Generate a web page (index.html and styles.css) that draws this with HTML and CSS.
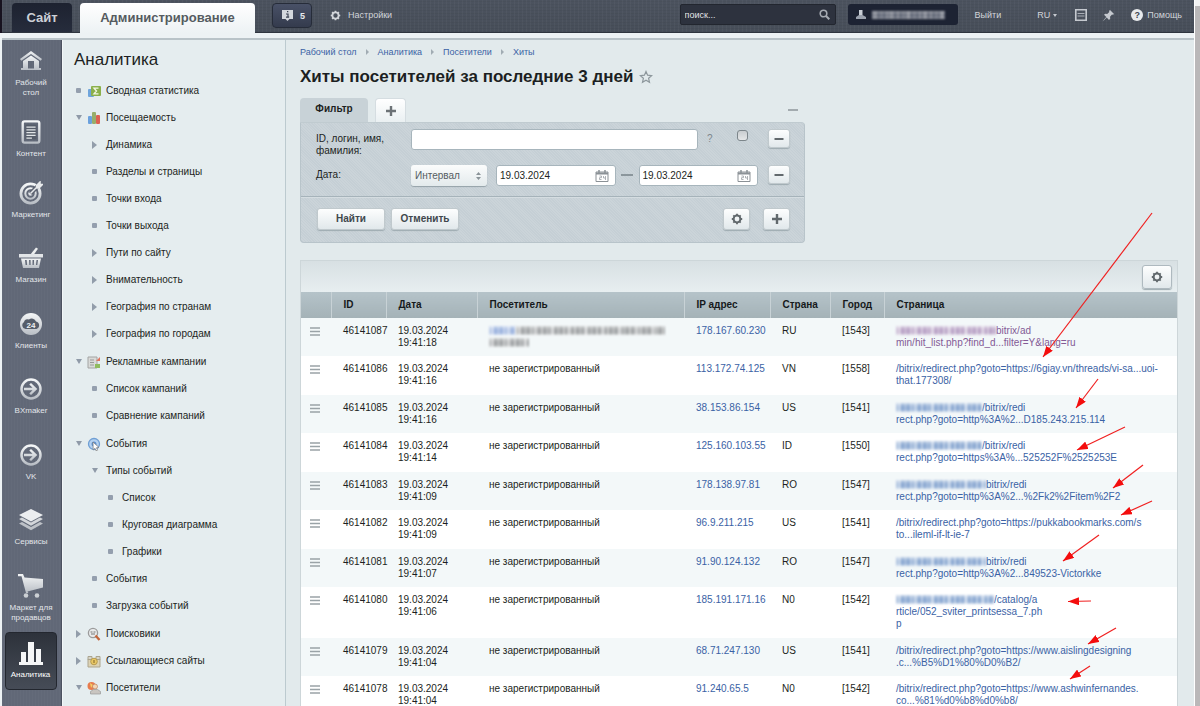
FILE: index.html
```html
<!DOCTYPE html>
<html lang="ru">
<head>
<meta charset="utf-8">
<title>Хиты посетителей</title>
<link rel="stylesheet" href="styles.css">
</head>
<body>
<svg class="defs" aria-hidden="true">
  <defs>
    <linearGradient id="metal" x1="0" y1="0" x2="0" y2="1"><stop offset="0" stop-color="#f4f6f7"/><stop offset="1" stop-color="#b9bec5"/></linearGradient>
    <symbol id="gear" viewBox="0 0 12 12"><circle cx="6" cy="6" r="3.4" fill="none" stroke="currentColor" stroke-width="2"/><path d="M6 .8v2M6 9.200v2M.8 6h2M9.200 6h2M2.300 2.300l1.400 1.400M8.300 8.300l1.400 1.400M2.300 9.700l1.400-1.400M8.300 3.700l1.400-1.400" stroke="currentColor" stroke-width="1.800"/></symbol>
    <symbol id="plus" viewBox="0 0 12 12"><path d="M6 1v10M1 6h10" stroke="currentColor" stroke-width="2.400"/></symbol>
    <symbol id="minus" viewBox="0 0 12 12"><path d="M1.500 6h9" stroke="currentColor" stroke-width="2"/></symbol>
    <symbol id="cal" viewBox="0 0 14 12"><path d="M1 2h12v9.500H1z" fill="#fff" stroke="#8b9196"/><path d="M1 3.500h12" stroke="#8b9196" stroke-width="2"/><path d="M4 0v3M10 0v3" stroke="#8b9196" stroke-width="1.500"/><path d="M4.500 6h2v1.700h-2v1.800h2M8.500 6v2h2M10.500 6v4" fill="none" stroke="#9aa0a4" stroke-width=".8"/></symbol>
    <symbol id="rows" viewBox="0 0 10 9"><path d="M0 1h10M0 4.500h10M0 8h10" stroke="#9aa3a7" stroke-width="1.300"/></symbol>
    <symbol id="go" viewBox="0 0 24 24"><circle cx="12" cy="12" r="9.500" fill="none" stroke="url(#metal)" stroke-width="2.500"/><path d="M5 10.800h8.500l-3.200-3.200 1.700-1.700 6.300 6.100-6.300 6.100-1.700-1.700 3.200-3.200H5z" fill="url(#metal)"/></symbol>
  </defs>
</svg>
<div class="window">
<div class="app">
  <header class="topbar">
    <nav class="tabs">
      <a class="tab tab-site" href="#">Сайт</a>
      <a class="tab tab-admin" href="#">Администрирование</a>
    </nav>
    <button class="notify" type="button"><svg width="11" height="11" viewBox="0 0 11 11"><path d="M0 0h11v9H7.500L5.500 11 3.500 9H0z" fill="#d3d7dd"/><path d="M4 4h2v3h1.200M4 7.200h3M5 1.600h1.300" fill="none" stroke="#3a4152" stroke-width="1.200"/></svg>5</button>
    <a class="top-link settings" href="#"><svg width="11" height="11"><use href="#gear"/></svg>Настройки</a>
    <div class="top-right">
      <label class="search"><input type="text" placeholder="поиск..." aria-label="поиск"><svg width="11" height="11" viewBox="0 0 11 11"><circle cx="4.500" cy="4.500" r="3.300" fill="none" stroke="#a5aab2" stroke-width="1.600"/><path d="M7 7l3.300 3.300" stroke="#a5aab2" stroke-width="2"/></svg></label>
      <a class="user" href="#" aria-label="Профиль"><svg width="10" height="10" viewBox="0 0 10 10"><path d="M3 0h3.500v5H3z" fill="#c9ced6"/><path d="M0 9V7l3-2h3.500L10 7v2z" fill="#9ba2ae"/></svg><span class="mosaic mosaic-user"></span></a>
      <a class="top-link exit" href="#">Выйти</a>
      <a class="top-link lang" href="#">RU<i class="caret"></i></a>
      <a class="top-link" href="#" aria-label="Панель"><svg width="12" height="12" viewBox="0 0 12 12"><path d="M.8.8h10.400v10.400H.8z" fill="none" stroke="#c5c9cf" stroke-width="1.600"/><path d="M2.500 4.500h7M2.500 7h7" stroke="#a9aeb6" stroke-width="1"/></svg></a>
      <a class="top-link pin" href="#" aria-label="Закрепить"><svg width="11" height="11" viewBox="0 0 11 11"><path d="M7 0l4 4-1 .8-1-.2-2 2.200.2 2L6 10 3.700 7.500.5 10.700l-.3-.3L3.300 7 1 4.800l1.200-1 2 .1L6.300 2 6 1z" fill="#c5c9cf"/></svg></a>
      <a class="top-link help" href="#"><i class="help-mark">?</i>Помощь</a>
    </div>
  </header>

  <div class="body">
    <nav class="rail">
      <a href="#" class="rail-item"><svg width="24" height="24" viewBox="0 0 24 24"><path d="M12 2l11 8-1.300 1.800L12 5 2.300 11.800 1 10z" fill="url(#metal)"/><path fill-rule="evenodd" d="M4 12l8-5.500 8 5.500v7h2v2H2v-2h2zm5 0v7.500h6V12z" fill="url(#metal)"/></svg><span>Рабочий<br>стол</span></a>
      <a href="#" class="rail-item"><svg width="24" height="26" viewBox="0 0 24 26"><rect x="3" y="1.500" width="18" height="23" rx="2" fill="none" stroke="url(#metal)" stroke-width="2.600"/><path d="M6 5h12v16H6z" fill="#555c69"/><path d="M7 7h10v1.400H7zM7 10h10v1.400H7zM7 13h10v1.400H7zM7 16h10v1.400H7zM7 19h6v1.400H7z" fill="#e2e5e8"/></svg><span>Контент</span></a>
      <a href="#" class="rail-item"><svg width="24" height="24" viewBox="0 0 24 24"><circle cx="11.500" cy="12.500" r="9.600" fill="none" stroke="url(#metal)" stroke-width="2.800"/><circle cx="11.500" cy="12.500" r="5.200" fill="none" stroke="url(#metal)" stroke-width="2"/><circle cx="11.500" cy="12.500" r="2.200" fill="#dfe2e6"/><path d="M11.500 12.500L20 4" stroke="#5d6371" stroke-width="4.500"/><path d="M11.500 12.500l8-8M17.500 4.500L21 1v2.500h2.500L20 7h-2.500z" stroke="#e8eaec" stroke-width="1.500" fill="#e8eaec"/></svg><span>Маркетинг</span></a>
      <a href="#" class="rail-item"><svg width="24" height="24" viewBox="0 0 24 24"><path d="M11 9l6-7.500 2 1.300L14.500 9z" fill="#eceeef"/><path d="M0 8h24v3.500H0z" fill="#e2e5e8"/><path fill-rule="evenodd" d="M2 12.500h20L20 22H4zM6 14l.6 5h1.500l-.4-5zm4 0l.3 5h1.300v-5zm3.500 0v5h1.300l.3-5zm4 0l-.5 5h1.300l.7-5z" fill="url(#metal)"/></svg><span>Магазин</span></a>
      <a href="#" class="rail-item"><svg width="24" height="24" viewBox="0 0 24 24"><circle cx="12" cy="12" r="11" fill="url(#metal)"/><path d="M6.500 17a3.800 3.800 0 0 1-1.500-7 3.600 3.600 0 0 1 5-2.500 4.600 4.600 0 0 1 7 2 3.900 3.900 0 0 1 .5 7.500z" fill="#565d6a"/><text x="12" y="15.500" text-anchor="middle" class="badge24">24</text></svg><span>Клиенты</span></a>
      <a href="#" class="rail-item"><svg width="24" height="24"><use href="#go"/></svg><span>BXmaker</span></a>
      <a href="#" class="rail-item"><svg width="24" height="24"><use href="#go"/></svg><span>VK</span></a>
      <a href="#" class="rail-item"><svg width="26" height="24" viewBox="0 0 26 24"><path d="M13 1l12 6-12 6.500L1 7z" fill="#eceef0"/><path d="M1 11l3-1.500 9 5 9-5 3 1.500-12 6.800z" fill="#d3d6da"/><path d="M1 15.500L4 14l9 5 9-5 3 1.500-12 6.800z" fill="#bdc1c7"/></svg><span>Сервисы</span></a>
      <a href="#" class="rail-item"><svg width="26" height="24" viewBox="0 0 26 24"><path d="M0 0h5l1.500 3.500L25 5v8.500L9.500 17.500l1 1.500H8L3.500 2.200H0z" fill="url(#metal)"/><circle cx="8" cy="21.500" r="2.300" fill="#ccd0d4"/><circle cx="19" cy="21.500" r="2.300" fill="#ccd0d4"/></svg><span>Маркет для<br>продавцов</span></a>
      <a href="#" class="rail-item rail-active"><svg width="26" height="24" viewBox="0 0 26 24"><path d="M1 21h2v-10h5v10h2V1h6v20h2V8h5v13h2v3H1z" fill="#f5f6f7"/></svg><span>Аналитика</span></a>
    </nav>

    <aside class="menu">
      <h2>Аналитика</h2>
      <ul>
        <li><a href="#"><i class="dot"></i><svg width="14" height="14" viewBox="0 0 14 14"><rect x="1" y="5" width="6" height="8" rx="1" fill="#6fa5dc"/><rect x="4" y="2" width="10" height="10" rx="1" fill="#8bb04b"/><path d="M11.500 4.200H7L9.500 7 7 9.800h4.500" fill="none" stroke="#f3f8e6" stroke-width="1.300"/></svg>Сводная статистика</a></li>
        <li><a href="#"><i class="open"></i><svg width="14" height="14" viewBox="0 0 14 14"><rect x="1" y="5" width="4" height="8" rx="1" fill="#6ba1dd"/><rect x="5" y="1" width="4" height="12" rx="1" fill="#98ae6a"/><rect x="9" y="4" width="4" height="9" rx="1" fill="#dc6152"/></svg>Посещаемость</a>
          <ul>
            <li><a href="#"><i class="closed"></i>Динамика</a></li>
            <li><a href="#"><i class="dot"></i>Разделы и страницы</a></li>
            <li><a href="#"><i class="dot"></i>Точки входа</a></li>
            <li><a href="#"><i class="dot"></i>Точки выхода</a></li>
            <li><a href="#"><i class="closed"></i>Пути по сайту</a></li>
            <li><a href="#"><i class="closed"></i>Внимательность</a></li>
            <li><a href="#"><i class="closed"></i>География по странам</a></li>
            <li><a href="#"><i class="closed"></i>География по городам</a></li>
          </ul></li>
        <li><a href="#"><i class="open"></i><svg width="14" height="14" viewBox="0 0 14 14"><path d="M1 2h9v11H1z" fill="#d9dad8" stroke="#a3a4a3"/><path d="M3 5h4M3 7.500h4M3 10h4" stroke="#999"/><path d="M9 6l4-4v4z" fill="#e07560"/><path d="M8 9h5v4H8z" fill="#8fbb5e"/></svg>Рекламные кампании</a>
          <ul>
            <li><a href="#"><i class="dot"></i>Список кампаний</a></li>
            <li><a href="#"><i class="dot"></i>Сравнение кампаний</a></li>
          </ul></li>
        <li><a href="#"><i class="open"></i><svg width="14" height="14" viewBox="0 0 14 14"><circle cx="7" cy="7" r="5.500" fill="#b5d2f0" stroke="#6f9fd4" stroke-width="1.300"/><circle cx="7" cy="7" r="2.500" fill="#5e92d0"/><path d="M6 5l6 5.500-2.500.2 1 2.500-1.500.6-1-2.500L6.200 13z" fill="#fff" stroke="#777" stroke-width=".7"/></svg>События</a>
          <ul>
            <li><a href="#"><i class="open"></i>Типы событий</a>
              <ul>
                <li><a href="#"><i class="dot"></i>Список</a></li>
                <li><a href="#"><i class="dot"></i>Круговая диаграмма</a></li>
                <li><a href="#"><i class="dot"></i>Графики</a></li>
              </ul></li>
            <li><a href="#"><i class="dot"></i>События</a></li>
            <li><a href="#"><i class="dot"></i>Загрузка событий</a></li>
          </ul></li>
        <li><a href="#"><i class="closed"></i><svg width="14" height="14" viewBox="0 0 14 14"><circle cx="6" cy="6" r="4.600" fill="#e9ebec" stroke="#9b9b9b" stroke-width="1.300"/><path d="M3.500 5h2M6.500 5h2M4 7h4" stroke="#777"/><path d="M8.500 8.500L12.500 13" stroke="#c4663c" stroke-width="2.400"/></svg>Поисковики</a></li>
        <li><a href="#"><i class="closed"></i><svg width="14" height="14" viewBox="0 0 14 14"><path d="M1 5h12v8H1z" fill="#ddd3b4" stroke="#ada58d"/><path d="M1 2.500h4v3H1zM9 2.500h4v3H9z" fill="#d7d5c9" stroke="#aaa48f"/><circle cx="7" cy="7.500" r="3.300" fill="#e9c865" stroke="#b79b50"/><path d="M7 6v3" stroke="#80652a"/></svg>Ссылающиеся сайты</a></li>
        <li><a href="#"><i class="open"></i><svg width="14" height="14" viewBox="0 0 14 14"><circle cx="4.500" cy="5" r="4" fill="#e77b4d"/><path d="M3 2l3 2-2 3z" fill="#f7cf63"/><circle cx="8" cy="5.500" r="2.500" fill="#f3d6b4" stroke="#bb7d5a" stroke-width=".7"/><path d="M3.500 13V10.500l3-2h4l3 2V13z" fill="#c9c5c0" stroke="#999" stroke-width=".7"/></svg>Посетители</a></li>
      </ul>
    </aside>

    <main class="content">
      <nav class="crumbs"><a href="#">Рабочий стол</a><i class="closed"></i><a href="#">Аналитика</a><i class="closed"></i><a href="#">Посетители</a><i class="closed"></i><a href="#">Хиты</a></nav>
      <h1>Хиты посетителей за последние 3 дней <svg width="14" height="14" viewBox="0 0 14 14"><path d="M7 1.500l1.600 3.700 4 .4-3 2.700.9 4L7 10.200l-3.500 2.100.9-4-3-2.700 4-.4z" fill="none" stroke="#8d979c" stroke-width="1.200"/></svg></h1>

      <form class="filter">
        <div class="filter-tabs">
          <button type="button" class="ftab ftab-on">Фильтр</button>
          <button type="button" class="ftab ftab-add" aria-label="Добавить"><svg width="12" height="12"><use href="#plus"/></svg></button>
          <button type="button" class="fold" aria-label="Свернуть"></button>
        </div>
        <div class="filter-body">
          <div class="frow">
            <label for="who">ID, логин, имя, фамилия:</label>
            <div class="field"><input id="who" class="text" type="text"><span class="hint">?</span><input class="tick" type="checkbox" aria-label="Точное совпадение"></div>
            <button type="button" class="btn sq" aria-label="Убрать"><svg width="12" height="12"><use href="#minus"/></svg></button>
          </div>
          <div class="frow">
            <label for="range">Дата:</label>
            <div class="field">
              <span class="select"><select id="range"><option>Интервал</option></select><svg width="5" height="8" viewBox="0 0 5 8"><path d="M0 3l2.500-3L5 3zM0 5l2.500 3L5 5z" fill="#8a9398"/></svg></span>
              <span class="date"><input type="text" value="19.03.2024" aria-label="Дата с"><svg width="14" height="12"><use href="#cal"/></svg></span>
              <i class="dash"></i>
              <span class="date"><input type="text" value="19.03.2024" aria-label="Дата по"><svg width="14" height="12"><use href="#cal"/></svg></span>
            </div>
            <button type="button" class="btn sq" aria-label="Убрать"><svg width="12" height="12"><use href="#minus"/></svg></button>
          </div>
          <div class="factions">
            <button type="button" class="btn wide">Найти</button>
            <button type="button" class="btn wide">Отменить</button>
            <button type="button" class="btn tool push" aria-label="Настроить"><svg width="12" height="12"><use href="#gear"/></svg></button>
            <button type="button" class="btn tool" aria-label="Добавить условие"><svg width="12" height="12"><use href="#plus"/></svg></button>
          </div>
        </div>
      </form>

      <section class="list">
        <div class="list-top"><button type="button" class="btn list-gear" aria-label="Настроить"><svg width="12" height="12"><use href="#gear"/></svg></button></div>
        <table>
          <colgroup><col class="c-menu"><col class="c-id"><col class="c-date"><col class="c-who"><col class="c-ip"><col class="c-land"><col class="c-city"><col></colgroup>
          <thead><tr><th></th><th>ID</th><th>Дата</th><th>Посетитель</th><th>IP адрес</th><th>Страна</th><th>Город</th><th>Страница</th></tr></thead>
          <tbody>
            <tr><td><svg width="10" height="9"><use href="#rows"/></svg></td><td>46141087</td><td>19.03.2024<br>19:41:18</td><td><span class="mosaic m-link"></span><span class="mosaic m-long"></span><br><span class="mosaic m-short"></span></td><td><a href="#">178.167.60.230</a></td><td>RU</td><td>[1543]</td><td><a class="seen" href="#"><span class="mosaic m-seen"></span>bitrix/ad<br>min/hit_list.php?find_d...filter=Y&amp;lang=ru</a></td></tr>
            <tr><td><svg width="10" height="9"><use href="#rows"/></svg></td><td>46141086</td><td>19.03.2024<br>19:41:16</td><td>не зарегистрированный</td><td><a href="#">113.172.74.125</a></td><td>VN</td><td>[1558]</td><td><a href="#">/bitrix/redirect.php?goto=https://6giay.vn/threads/vi-sa...uoi-<br>that.177308/</a></td></tr>
            <tr><td><svg width="10" height="9"><use href="#rows"/></svg></td><td>46141085</td><td>19.03.2024<br>19:41:16</td><td>не зарегистрированный</td><td><a href="#">38.153.86.154</a></td><td>US</td><td>[1541]</td><td><a href="#"><span class="mosaic m-url"></span>/bitrix/redi<br>rect.php?goto=http%3A%2...D185.243.215.114</a></td></tr>
            <tr><td><svg width="10" height="9"><use href="#rows"/></svg></td><td>46141084</td><td>19.03.2024<br>19:41:14</td><td>не зарегистрированный</td><td><a href="#">125.160.103.55</a></td><td>ID</td><td>[1550]</td><td><a href="#"><span class="mosaic m-url"></span>/bitrix/redi<br>rect.php?goto=https%3A%...525252F%2525253E</a></td></tr>
            <tr><td><svg width="10" height="9"><use href="#rows"/></svg></td><td>46141083</td><td>19.03.2024<br>19:41:09</td><td>не зарегистрированный</td><td><a href="#">178.138.97.81</a></td><td>RO</td><td>[1547]</td><td><a href="#"><span class="mosaic m-url m-wide"></span>bitrix/redi<br>rect.php?goto=http%3A%2...%2Fk2%2Fitem%2F2</a></td></tr>
            <tr><td><svg width="10" height="9"><use href="#rows"/></svg></td><td>46141082</td><td>19.03.2024<br>19:41:09</td><td>не зарегистрированный</td><td><a href="#">96.9.211.215</a></td><td>US</td><td>[1541]</td><td><a href="#">/bitrix/redirect.php?goto=https://pukkabookmarks.com/s<br>to...ileml-if-lt-ie-7</a></td></tr>
            <tr><td><svg width="10" height="9"><use href="#rows"/></svg></td><td>46141081</td><td>19.03.2024<br>19:41:07</td><td>не зарегистрированный</td><td><a href="#">91.90.124.132</a></td><td>RO</td><td>[1547]</td><td><a href="#"><span class="mosaic m-url m-wide"></span>bitrix/redi<br>rect.php?goto=http%3A%2...849523-Victorkke</a></td></tr>
            <tr><td><svg width="10" height="9"><use href="#rows"/></svg></td><td>46141080</td><td>19.03.2024<br>19:41:06</td><td>не зарегистрированный</td><td><a href="#">185.191.171.16</a></td><td>N0</td><td>[1542]</td><td><a href="#"><span class="mosaic m-url m-widest"></span>/catalog/a<br>rticle/052_sviter_printsessa_7.ph<br>p</a></td></tr>
            <tr><td><svg width="10" height="9"><use href="#rows"/></svg></td><td>46141079</td><td>19.03.2024<br>19:41:04</td><td>не зарегистрированный</td><td><a href="#">68.71.247.130</a></td><td>US</td><td>[1541]</td><td><a href="#">/bitrix/redirect.php?goto=https://www.aislingdesigning<br>.c...%B5%D1%80%D0%B2/</a></td></tr>
            <tr><td><svg width="10" height="9"><use href="#rows"/></svg></td><td>46141078</td><td>19.03.2024<br>19:41:04</td><td>не зарегистрированный</td><td><a href="#">91.240.65.5</a></td><td>N0</td><td>[1542]</td><td><a href="#">/bitrix/redirect.php?goto=https://www.ashwinfernandes.<br>co...%81%d0%b8%d0%b8/</a></td></tr>
          </tbody>
        </table>
      </section>
    </main>
  </div>
</div>
<div class="scroll"><i></i></div>
</div>
<svg class="arrows" width="1200" height="706" viewBox="0 0 1200 706" aria-hidden="true">
  <defs><marker id="head" viewBox="0 0 11 8" refX="11" refY="4" markerWidth="11" markerHeight="8" markerUnits="userSpaceOnUse" orient="auto"><path d="M0 0l11 4L0 8z" fill="#f40d0d"/></marker></defs>
  <g stroke="#f02020" stroke-width="1.200">
    <path d="M1152 213L1043 357" marker-end="url(#head)"/>
    <path d="M1098 379L1076 408" marker-end="url(#head)"/>
    <path d="M1125 427L1077 450" marker-end="url(#head)"/>
    <path d="M1143 465L1113 488" marker-end="url(#head)"/>
    <path d="M1152 501L1121 515" marker-end="url(#head)"/>
    <path d="M1099 535L1063 561" marker-end="url(#head)"/>
    <path d="M1091 601L1068 601.500" marker-end="url(#head)"/>
    <path d="M1116 628L1088 644" marker-end="url(#head)"/>
    <path d="M1090 666L1070 679" marker-end="url(#head)"/>
  </g>
</svg>
</body>
</html>
```

FILE: styles.css
```css
* { box-sizing: border-box; }
body {
  margin: 0;
  font: 10px/12px "Liberation Sans", Arial, sans-serif;
  color: #1c1f22;
  overflow: hidden;
}
a { text-decoration: none; color: #3a62a5; }
ul { list-style: none; margin: 0; padding: 0; }
button, input, select { font: inherit; color: inherit; margin: 0; padding: 0; }
svg { flex: none; display: block; }
.defs { position: absolute; width: 0; height: 0; }
.arrows { position: absolute; top: 0; left: 0; pointer-events: none; }

.window { display: flex; height: 100vh; overflow: hidden; background: #e3ebed; }
.app { flex: 1; min-width: 0; display: flex; flex-direction: column; border-left: 2px solid #17121f; }
.scroll { flex: none; width: 6px; background: #bab8b9; border-left: 1px solid #fff; }
.scroll i { display: block; height: 6px; background: #f3f3f3; }

/* Top bar */
.topbar {
  flex: none;
  display: flex;
  align-items: flex-start;
  height: 33px;
  padding: 3px 12px 0 10px;
  border-bottom: 1px solid #2f353f;
  background:
    repeating-linear-gradient(90deg, rgba(255,255,255,.03) 0 1px, transparent 1px 4px),
    repeating-linear-gradient(0deg, rgba(0,0,0,.04) 0 1px, transparent 1px 3px),
    linear-gradient(#4c535f, #474e59);
}
.tabs { display: flex; gap: 8px; }
.tab { height: 30px; line-height: 30px; font-size: 13px; font-weight: bold; text-align: center; border-radius: 4px 4px 0 0; }
.tab-site { width: 60px; height: 29px; background: linear-gradient(#1d2230, #262c3c); color: #ccd0d6; }
.tab-admin { width: 175px; background: linear-gradient(#fff, #edf2f4); color: #555b60; }
.notify { display: flex; align-items: center; gap: 7px; width: 40px; height: 25px; margin: 0 18px 0 17px; padding-left: 9px; border: 1px solid #262c39; border-radius: 4px; background: linear-gradient(#495167, #343b4d); color: #e8eaee; font-size: 9px; font-weight: bold; }
.top-link { display: flex; align-items: center; height: 24px; color: #d2d5da; font-size: 9px; }
.settings { gap: 7px; }
.top-right { display: flex; margin-left: auto; }
.search { display: flex; align-items: center; width: 156px; height: 21px; margin: 1px 12px 0 0; padding: 0 5px 0 4px; border: 1px solid #22262f; border-radius: 2px; background: #2d323e; }
.search input { flex: 1; min-width: 0; border: 0; background: none; outline: 0; font-size: 9px; color: #e1e4e8; }
.search input::placeholder { color: #e1e4e8; opacity: 1; }
.user { display: flex; align-items: center; gap: 6px; width: 110px; height: 21px; margin: 1px 17px 0 0; padding-left: 8px; border-radius: 3px; background: #1d2333; }
.exit { margin-right: 36px; }
.lang { gap: 3px; margin-right: 18px; }
.caret { border: 2px solid transparent; border-top: 3px solid #c5c9cf; border-bottom: 0; }
.pin { margin: 0 17px 0 16px; }
.help { gap: 4px; }
.help-mark { width: 12px; height: 12px; line-height: 12px; border-radius: 50%; background: #e8eaec; color: #3d434e; text-align: center; font-style: normal; font-weight: bold; }

.body { flex: 1; min-height: 0; display: flex; border-top: 2px solid #b9c3c8; outline: 5px solid #edf2f4; outline-offset: 0; margin-top: 5px; }

/* Left rail */
.rail { flex: none; width: 60px; padding-top: 9px; border-right: 1px solid #4c5260; background: repeating-linear-gradient(90deg, rgba(255,255,255,.02) 0 1px, transparent 1px 3px), #616877; }
.rail-item { display: flex; flex-direction: column; align-items: center; justify-content: flex-start; height: 65px; padding-right: 1px; color: #e3e6ea; font-size: 8px; line-height: 10px; text-align: center; }
.rail-item:nth-child(even) { height: 66px; }
.rail-item:nth-child(1) { height: 71px; }
.rail-item:nth-child(2) { height: 61px; }
.rail-item svg { height: 24px; margin-bottom: 5px; }
.rail-item.rail-active { width: 52px; height: 58px; margin: -7px 0 0 3px; padding-top: 8px; border: 1px solid #23272f; border-radius: 4px; background: linear-gradient(#2d323b, #464c57); color: #fff; }
.badge24 { font: bold 8px "Liberation Sans", sans-serif; fill: #eef0f1; }

/* Section menu */
.menu { flex: none; width: 224px; padding: 10px 0 0 11px; border-left: 1px solid #f3f7f8; border-right: 1px solid #bccacf; background: #e5edef; overflow: hidden; }
.menu h2 { margin: 0 0 7px; font-size: 17px; line-height: 20px; font-weight: normal; }
.menu a { display: flex; align-items: center; height: 27px; color: #1c1f22; white-space: nowrap; }
.menu a svg { margin-right: 5px; }
.menu ul ul { padding: 0 0 1px 16px; }
.menu ul ul ul { padding-bottom: 0; }
.dot, .open, .closed { flex: none; }
.dot { width: 5px; height: 5px; margin: 0 9px 0 2px; border-radius: 1px; background: #949fae; }
.open { width: 6px; margin: 0 8px 0 2px; border: 3px solid transparent; border-top: 5px solid #8f9aa8; border-bottom: 0; }
.closed { width: 5px; margin: 0 9px 0 2px; border: 4px solid transparent; border-left: 5px solid #929daa; border-right: 0; }
.menu li .dot, .menu li .closed { margin-right: 6px; }
.menu li .open { margin-right: 5px; }
.menu ul ul .dot, .menu ul ul .closed { margin-right: 9px; }
.menu ul ul .open { margin-right: 8px; }

/* Content */
.content { flex: 1; min-width: 0; padding: 6px 16px 0 14px; overflow: hidden; background: #e2eaec; }
.crumbs { display: flex; align-items: center; font-size: 9px; }
.crumbs .closed { width: 3px; margin: 0 9px; border-width: 3px 0 3px 3px; border-left-color: #a1acb3; }
.content h1 { display: flex; align-items: center; gap: 6px; margin: 9px 0 11px; font-size: 17px; line-height: 20px; }

.filter { max-width: 505px; }
.filter-tabs { display: flex; align-items: flex-end; height: 24px; }
.ftab { height: 24px; border: 0; border-radius: 4px 4px 0 0; }
.ftab-on { width: 68px; padding-bottom: 2px; background: #c8d2d7; font-weight: bold; }
.ftab-add { display: grid; place-items: center; width: 31px; margin-left: 7px; background: linear-gradient(#fff, #eaf0f2); border: 1px solid #d5dde1; border-bottom: 0; color: #6c7276; }
.fold { width: 10px; height: 2px; margin: 0 7px 11px auto; border: 0; background: #a3abaf; }
.filter-body { padding-top: 6px; border: 1px solid #b8c4ca; border-top-color: #c0cbd0; border-radius: 0 4px 4px 4px; background: repeating-linear-gradient(45deg, rgba(255,255,255,.1) 0 1px, transparent 1px 2px), #c5cfd5; }
.frow { display: flex; gap: 10px; align-items: flex-start; padding: 0 14px 0 15px; margin-bottom: 8px; }
.frow label { width: 85px; padding-top: 4px; }
.frow + .frow { margin-bottom: 10px; }
.field { flex: 1; min-width: 0; display: flex; }
.text, .date { height: 21px; border: 1px solid #a7b5bc; border-radius: 3px; background: #fff; }
.text { flex: 1; min-width: 0; padding: 0 4px; }
.hint { width: 30px; margin-left: 9px; padding-top: 4px; color: #7b868c; }
.tick { appearance: none; width: 11px; height: 11px; margin: 1px 10px 0 0; border: 1px solid #7d868b; border-radius: 3px; background: linear-gradient(#c9cdd0, #e5e7e8); }
.select { display: flex; align-items: center; width: 76px; height: 21px; margin-right: 9px; padding: 0 6px 0 4px; border-radius: 3px; background: linear-gradient(#fbfcfc, #e3eaec); box-shadow: 0 1px 1px #94a1a8; color: #555d62; }
.select select { flex: 1; min-width: 0; appearance: none; border: 0; background: none; }
.date { flex: 1; min-width: 0; display: flex; align-items: center; padding: 0 6px 0 3px; }
.date input { flex: 1; min-width: 0; border: 0; background: none; }
.dash { width: 12px; height: 2px; margin: 9px 6px 0 5px; background: #8b969c; }
.btn { display: grid; place-items: center; border: 1px solid #c0c9cd; border-radius: 3px; background: linear-gradient(#fdfefe, #e1e8eb); box-shadow: 0 1px 1px #9eabb1; color: #62696d; }
.sq { width: 22px; height: 19px; }
.factions { display: flex; gap: 6px; padding: 11px 14px 12px 16px; border-top: 1px solid #a6b3ba; box-shadow: inset 0 1px #d5dde1; }
.wide { width: 68px; height: 22px; color: #3f484d; font-weight: bold; }
.tool { width: 27px; height: 22px; }
.push { margin: 0 7px 0 auto; }

/* Hit list */
.list { margin-top: 17px; border: 1px solid #cdd6d9; border-bottom: 0; background: #fff; }
.list-top { display: flex; justify-content: flex-end; align-items: center; height: 31px; padding-right: 5px; background: linear-gradient(#d8e0e3, #e7eef0); }
.list-gear { width: 30px; height: 24px; border-color: #aeb9bf; }
table { width: 100%; table-layout: fixed; border-collapse: collapse; }
.c-menu { width: 30px; }
.c-id { width: 55px; }
.c-date { width: 91px; }
.c-who { width: 207px; }
.c-ip { width: 86px; }
.c-land { width: 60px; }
.c-city { width: 54px; }
th { height: 26px; padding: 0 0 0 12px; border-left: 1px solid #c8d2d6; background: linear-gradient(#b5c3c9, #a4b2b7); text-align: left; color: #16191b; }
th:first-child { border-left: 0; }
td { padding: 7px 0 7px 12px; vertical-align: top; white-space: nowrap; }
td:first-child { padding: 9px 0 0 9px; }
tbody tr:nth-child(odd) { background: #f3f8f9; }
tbody tr:nth-child(even) td { padding-bottom: 8px; }
.seen { color: #835a96; }

/* Pixelated private data */
.mosaic {
  display: inline-block;
  height: 9px;
  vertical-align: -1px;
  background:
    repeating-linear-gradient(90deg, transparent 0 3px, rgba(255,255,255,.4) 3px 5px, transparent 5px 8px, rgba(255,255,255,.2) 8px 11px),
    repeating-linear-gradient(90deg, rgba(255,255,255,.35) 0 4px, transparent 4px 17px),
    linear-gradient(rgba(255,255,255,.5), transparent 40% 75%, rgba(255,255,255,.5)),
    var(--ink, #a2a5a7);
  filter: blur(1px);
}
.mosaic-user { --ink: #848a98; width: 73px; height: 8px; opacity: .7; }
.m-link { --ink: #9db4df; width: 27px; }
.m-long { width: 149px; }
.m-short { width: 40px; }
.m-url { --ink: #8ba9d2; width: 86px; }
.m-wide { width: 90px; }
.m-widest { width: 98px; }
.m-seen { --ink: #b9a3c6; width: 100px; }
```
